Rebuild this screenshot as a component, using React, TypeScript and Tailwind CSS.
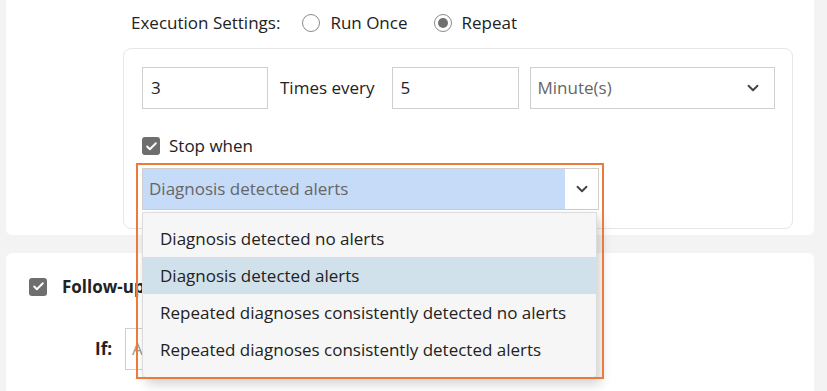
import { ChevronDown, Check } from "lucide-react";

const stopOptions = [
  "Diagnosis detected no alerts",
  "Diagnosis detected alerts",
  "Repeated diagnoses consistently detected no alerts",
  "Repeated diagnoses consistently detected alerts",
];

function Radio({ checked }: { checked?: boolean }) {
  return (
    <span className="flex h-[18px] w-[18px] items-center justify-center rounded-full border-[1.5px] border-[#8a8a8a] bg-white">
      {checked ? <span className="h-[10px] w-[10px] rounded-full bg-[#6f6f6f]" /> : null}
    </span>
  );
}

function Checkbox() {
  return (
    <span className="flex h-[18px] w-[18px] items-center justify-center rounded-[3px] bg-[#6e6e6e] text-white">
      <Check className="h-[13px] w-[13px]" strokeWidth={3.5} />
    </span>
  );
}

export default function App() {
  return (
    <div className="h-[391px] w-[827px] overflow-hidden bg-[#f3f3f3] font-['Open_Sans',sans-serif] text-[17px] text-[#222]">
      {/* execution settings panel */}
      <div className="ml-[6px] h-[235px] w-[808px] rounded-b-md bg-white pl-[117px]">
        <div className="flex h-[46px] items-center pl-[8px]">
          <span>Execution Settings:</span>
          <label className="ml-[22px] flex items-center gap-[10px]">
            <Radio />
            <span>Run Once</span>
          </label>
          <label className="ml-[26px] flex items-center gap-[10px]">
            <Radio checked />
            <span>Repeat</span>
          </label>
        </div>

        <div className="mt-[2px] h-[181px] w-[670px] rounded-lg border border-[#e6e6e6] pl-[18px] pt-[18px]">
          <div className="flex items-center">
            <div className="flex h-[42px] w-[126px] items-center border border-[#cfcfcf] px-[8px]">3</div>
            <span className="ml-[12px]">Times every</span>
            <div className="ml-[17px] flex h-[42px] w-[127px] items-center border border-[#cfcfcf] px-[8px]">5</div>
            <div className="ml-[11px] flex h-[42px] w-[245px] items-center justify-between border border-[#cfcfcf] pl-[7px] pr-[12px] text-[#666]">
              <span>Minute(s)</span>
              <ChevronDown className="h-[18px] w-[18px] text-[#444]" strokeWidth={2.5} />
            </div>
          </div>

          <label className="mt-[19px] flex h-[36px] items-center gap-[9px]">
            <Checkbox />
            <span>Stop when</span>
          </label>

          <div className="relative mt-[4px] w-[457px]">
            <div className="flex h-[42px] border border-[#cfcfcf]">
              <div className="flex flex-1 items-center bg-[#c5dbf8] pl-[6px] text-[#666]">
                Diagnosis detected alerts
              </div>
              <div className="flex w-[33px] items-center justify-center bg-white">
                <ChevronDown className="h-[18px] w-[18px] text-[#444]" strokeWidth={2.5} />
              </div>
            </div>

            {/* open list */}
            <div className="absolute left-0 top-[44px] z-10 w-[455px] rounded-b-[4px] border border-[#dcdcdc] bg-[#f6f6f6] pb-[9px] pt-[7px] shadow-[4px_6px_12px_rgba(0,0,0,0.18)]">
              {stopOptions.map((opt, i) => (
                <div
                  key={opt}
                  className={
                    "flex h-[37px] items-center pl-[17px] " + (i === 1 ? "bg-[#d0e1eb]" : "")
                  }
                >
                  {opt}
                </div>
              ))}
            </div>

            {/* focus frame */}
            <div className="pointer-events-none absolute left-[-6px] top-[-5px] z-20 h-[216px] w-[468px] border-2 border-[#ee7a3a]" />
          </div>
        </div>
      </div>

      {/* follow-up panel */}
      <div className="ml-[6px] mt-[18px] h-[200px] w-[808px] rounded-t-md bg-white pl-[23px] pt-[21px]">
        <label className="flex items-center gap-[15px]">
          <Checkbox />
          <span className="font-bold">Follow-up</span>
        </label>
        <div className="mt-[28px] flex items-center pl-[66px]">
          <span className="font-bold">If:</span>
          <div className="ml-[13px] flex h-[42px] w-[300px] items-center border border-[#cfcfcf] px-[6px] text-[#999]">
            Any
          </div>
        </div>
      </div>
    </div>
  );
}
